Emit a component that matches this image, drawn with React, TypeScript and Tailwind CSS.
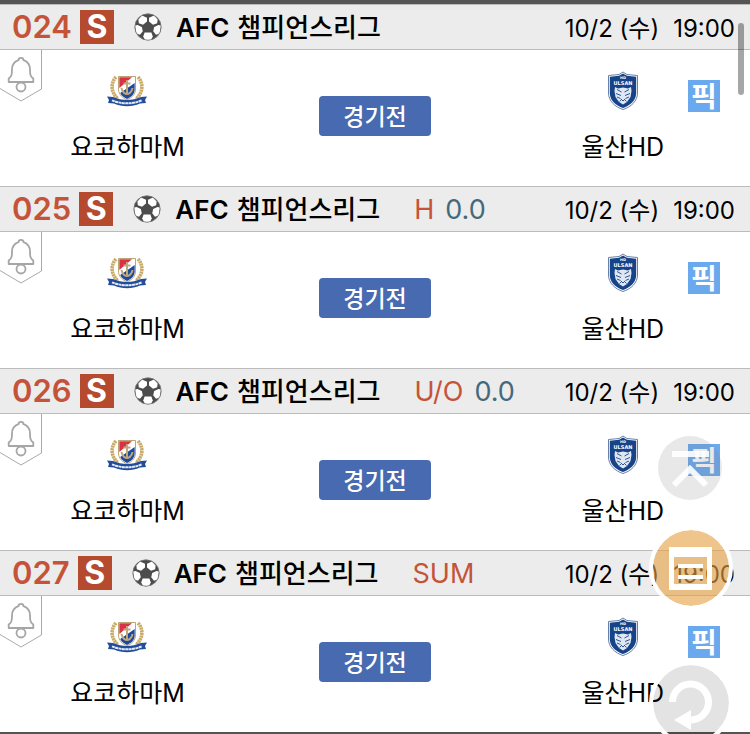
import React from "react";

type Match = { id: string; market?: string; line?: string };

const matches: Match[] = [
  { id: "024" },
  { id: "025", market: "H", line: "0.0" },
  { id: "026", market: "U/O", line: "0.0" },
  { id: "027", market: "SUM" },
];

function SoccerBall() {
  return (
    <svg viewBox="0 0 28 28" className="size-7 shrink-0" aria-hidden="true">
      <defs>
        <clipPath id="ball">
          <circle cx="14" cy="14" r="13.2" />
        </clipPath>
      </defs>
      <circle cx="14" cy="14" r="13.2" fill="#4c4c4c" />
      <g clipPath="url(#ball)" fill="#fff">
        <path d="M8 2.6 13 4.8 13 8.6 9 11.8 4.8 10.2 4.4 6.4Z" />
        <path d="M20 2.6 15 4.8 15 8.6 19 11.8 23.2 10.2 23.6 6.4Z" />
        <path d="M1 12.6 3.6 12 7.8 14 8.8 18.2 6 21.8 2.4 20.4Z" />
        <path d="M27 12.6 24.4 12 20.2 14 19.2 18.2 22 21.8 25.6 20.4Z" />
        <path d="M10.6 19.6 17.4 19.6 18.8 23.4 16.6 27.4 11.4 27.4 9.2 23.4Z" />
      </g>
      <circle cx="14" cy="14" r="13.2" fill="none" stroke="#777" strokeWidth="0.8" />
    </svg>
  );
}

function BellTab() {
  return (
    <svg viewBox="0 0 43 54" className="h-[54px] w-[43px]" fill="none" aria-hidden="true">
      <path d="M41.5 0V39L21 51 0 38.5" stroke="#a9a9a9" />
      <path
        d="M18.5 10.2C18.5 7 23.5 7 23.5 10.2C28.5 12 30 15.5 30 19.5C30 25 30.5 26.5 33.3 28.5V32H8.7V28.5C11.5 26.5 12 25 12 19.5C12 15.5 13.5 12 18.5 10.2Z"
        stroke="#a6a6a6"
        strokeWidth="1.8"
        strokeLinejoin="round"
      />
      <circle cx="21" cy="37" r="4.5" fill="#fff" stroke="#a6a6a6" strokeWidth="1.8" />
    </svg>
  );
}

function MarinosCrest() {
  return (
    <svg viewBox="0 0 42 32" className="h-8 w-[42px]" aria-hidden="true">
      <g fill="none" stroke="#c9ab68" strokeWidth="3.6" strokeDasharray="2.2 0.5">
        <path d="M9 2C3.5 8 3.5 17 11 24" />
        <path d="M31 2C36.5 8 36.5 17 29 24" />
      </g>
      <path d="M11.5 1.5H28.5V14C28.5 20 24 23 20 25 16 23 11.5 20 11.5 14Z" fill="#fff" stroke="#b49a63" strokeWidth="0.9" />
      <path d="M12.3 2.3H25L12.3 13Z" fill="#dc2f48" />
      <path d="M27.7 8V14C27.7 19.5 24 22 20 24 17 22.5 14.5 20.8 13.2 18Z" fill="#1e4a9e" />
      <path d="M20 5V19M16.5 8.5H23.5M14.5 13C15 18 19 19 20 19 21 19 25 18 25.5 13" fill="none" stroke="#bda77b" strokeWidth="2" />
      <path d="M0 21.5 6 22C15 26 25 26 34 22L40 21.5 38 25 39 28 33 28.5C25 32 15 32 7 28.5L1 28 2 25Z" fill="#214d9b" />
      <path d="M5 25.3C14 29.3 26 29.3 35 25.3" fill="none" stroke="#e4ebf5" strokeWidth="2" strokeDasharray="3 0.4" />
    </svg>
  );
}

function UlsanCrest() {
  return (
    <svg viewBox="0 0 32 40" className="h-10 w-8" aria-hidden="true">
      <path d="M16 1 20 3.5 30.5 4.5V22C30.5 30 24 36 16 38.5 8 36 1.5 30 1.5 22V4.5L12 3.5Z" fill="#fff" stroke="#56739f" strokeWidth="0.9" />
      <path d="M16 2.5 20 4.8 29.2 5.7V22C29.2 29 23.5 34.5 16 37 8.5 34.5 2.8 29 2.8 22V5.7L12 4.8Z" fill="#174489" />
      <text x="16" y="7.8" textAnchor="middle" fontSize="3.5" fontWeight="700" fill="#fff" fontFamily="DejaVu Sans, sans-serif">HD</text>
      <text x="16" y="13.6" textAnchor="middle" fontSize="5" fontWeight="700" fill="#fff" fontFamily="DejaVu Sans, sans-serif">ULSAN</text>
      <path d="M8 16 11 17.5 16 16.5 21 17.5 24 16 24.5 20 23.5 26 20 31 16 33.5 12 31 8.5 26 7.5 20Z" fill="#dfe8f2" />
      <path d="M10 18.5 14.5 21M22 18.5 17.5 21M9 22.5 14 24.5M23 22.5 18 24.5M10 26 13.5 27.5M22 26 18.5 27.5M14 28 16 30 18 28M12.5 30.5 14 29M19.5 30.5 18 29" fill="none" stroke="#174489" strokeWidth="0.9" />
    </svg>
  );
}

function MatchRow({ match }: { match: Match }) {
  return (
    <article>
      <header className="flex h-[46px] items-center border-y border-[#bbb] bg-[#ececec] pr-[15px] pl-3">
        <span className="text-[31px] leading-9 font-semibold text-[#c55338]">{match.id}</span>
        <span className="ml-2 flex size-[34px] items-center justify-center bg-[#b54a2e] text-[32px] leading-9 font-bold text-white">S</span>
        <span className="ml-5 flex">
          <SoccerBall />
        </span>
        <h2 className="ml-[14px] flex gap-2 pt-0.5 text-[26px] leading-9 font-semibold whitespace-nowrap">
          <span>AFC</span> <span className="font-medium">챔피언스리그</span>
        </h2>
        {match.market && <span className="ml-[34px] pt-0.5 text-[27px] leading-9 text-[#c55338]">{match.market}</span>}
        {match.line && <span className="ml-[11px] pt-0.5 text-[27px] leading-9 text-[#44697d]">{match.line}</span>}
        <time className="ml-auto flex gap-[14px] pt-[3px] text-[24px] leading-9 whitespace-nowrap">
          <span>10/2 (수)</span>
          <span>19:00</span>
        </time>
      </header>
      <div className="relative grid h-[136px] grid-cols-[1fr_112px_1fr] bg-white">
        <button type="button" aria-label="알림" className="absolute top-0 left-0">
          <BellTab />
        </button>
        <div className="flex flex-col items-center pt-[25px] pr-16">
          <MarinosCrest />
          <span className="mt-[22px] text-[25px] leading-9">요코하마M</span>
        </div>
        <button type="button" className="mt-[46px] h-10 rounded bg-[#476ab0] pt-px text-[23px] leading-8 font-medium text-white">
          경기전
        </button>
        <div className="flex justify-end pr-[30px]">
          <div className="flex flex-col items-center pt-[21px]">
            <UlsanCrest />
            <span className="mt-[18px] text-[25px] leading-9">울산HD</span>
          </div>
          <button type="button" className="mt-[30px] ml-6 flex size-8 items-center justify-center bg-[#6ba9ee] pt-0.5 text-[28px] leading-8 font-bold text-white">
            픽
          </button>
        </div>
      </div>
    </article>
  );
}

export default function App() {
  return (
    <div className="relative h-screen overflow-hidden bg-white font-['Inter','Noto_Sans_CJK_KR',sans-serif] text-black">
      <main className="border-y-4 border-[#555]">
        {matches.map((m) => (
          <MatchRow key={m.id} match={m} />
        ))}
      </main>
      <div className="absolute top-[23px] right-[6px] h-[72px] w-[6px] rounded-full bg-black/35" />
      <button type="button" aria-label="맨 위로" className="absolute top-[436px] right-7 size-16 rounded-full bg-[#808080]/18">
        <svg viewBox="0 0 64 64" className="size-16" fill="none" stroke="#fff" strokeOpacity="0.9" strokeWidth="6">
          <path d="M14 18H51M16 49 32 33 48 49" />
        </svg>
      </button>
      <button type="button" aria-label="목록" className="absolute top-[526px] right-[17px] size-[84px] rounded-full border-4 border-white bg-[#e6a145]/62 bg-clip-padding">
        <svg viewBox="0 0 76 76" className="size-[76px]" fill="#fff">
          <path fillRule="evenodd" d="M16 17H59V60H16ZM21 27V54H54V27Z" />
          <path d="M25 34H50V38H25ZM25 45H50V49H25Z" />
        </svg>
      </button>
      <button type="button" aria-label="새로고침" className="absolute top-[661px] right-[17px] size-[84px] rounded-full border-4 border-white bg-black/11 bg-clip-padding">
        <svg viewBox="0 0 76 76" className="size-[76px]">
          <path d="M19.5 37A18 18 0 1 1 37 55" fill="none" stroke="#fff" strokeWidth="7" />
          <path d="M21 55 38 45V65Z" fill="#fff" />
        </svg>
      </button>
    </div>
  );
}
